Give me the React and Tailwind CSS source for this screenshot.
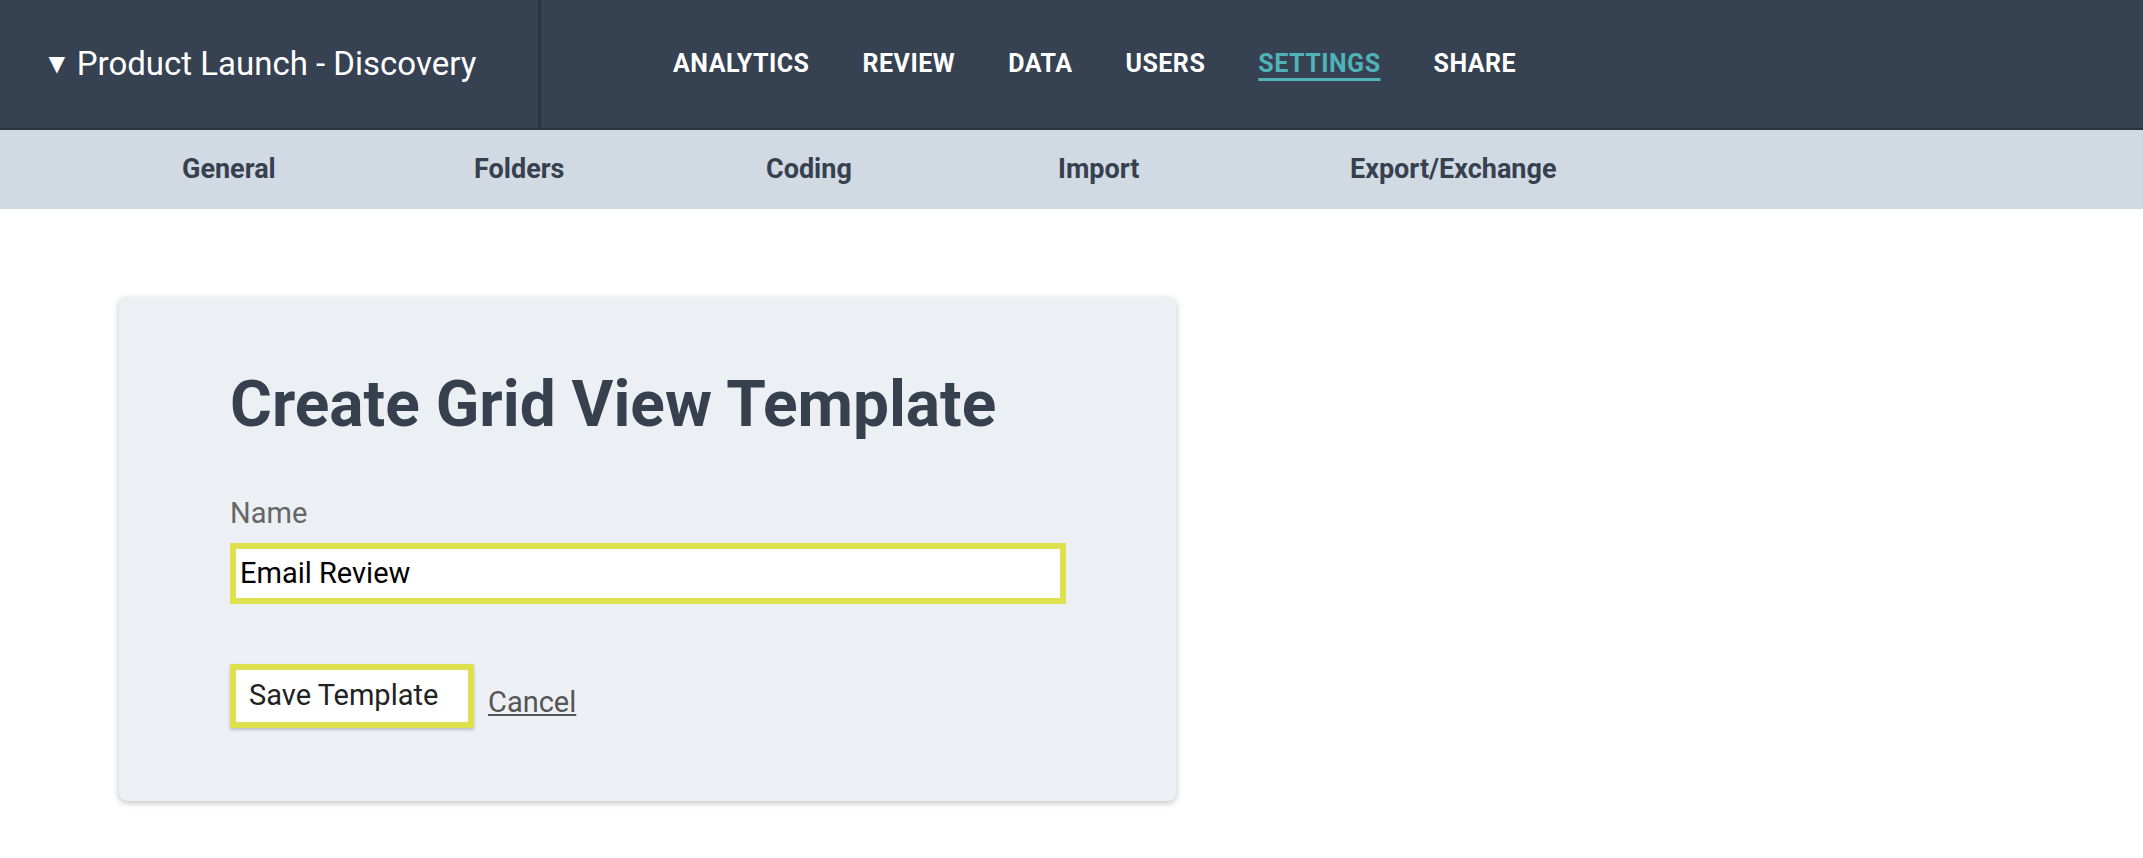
export default function App() {
  const nav = ["ANALYTICS", "REVIEW", "DATA", "USERS", "SETTINGS", "SHARE"];
  const sub = ["General", "Folders", "Coding", "Import", "Export/Exchange"];
  return (
    <div className="w-[2143px] h-[858px] bg-white" style={{ fontFamily: "Roboto, sans-serif" }}>
      <div className="h-[130px] bg-[#364152] flex border-b-2 border-[#2a3340]">
        <div className="w-[541px] border-r-[3px] border-[#2a3340] flex items-center pl-[43px] text-white text-[33px]">
          <span className="text-[28px] mr-[6px]">▼</span>Product Launch - Discovery
        </div>
        <div className="flex items-center pl-[132px] gap-[53px]">
          {nav.map((n) => (
            <span key={n} className={`text-[25px] font-bold tracking-[0.5px] ${n === "SETTINGS" ? "text-[#4fb3b8] underline underline-offset-[6px] decoration-[3px]" : "text-white"}`}>{n}</span>
          ))}
        </div>
      </div>
      <div className="h-[79px] bg-[#d1dae3] flex items-center pl-[182px]">
        {sub.map((s) => (
          <span key={s} className="w-[292px] text-[27px] font-bold text-[#36404f]">{s}</span>
        ))}
      </div>
      <div className="pl-[119px] pt-[88px]">
        <div className="w-[1057px] h-[504px] bg-[#ecf0f4] rounded-[8px] shadow-[0_2px_6px_rgba(0,0,0,0.25)] pl-[111px] pt-[76px]">
          <h1 className="text-[64px] font-bold text-[#36404f] leading-none">Create Grid View Template</h1>
          <div className="mt-[62px] text-[29px] text-[#666] leading-none">Name</div>
          <div className="mt-[15px] w-[836px] h-[61px] border-[6px] border-[#dfe04e] bg-white flex items-center pl-[4px] text-[29px] text-black">Email Review</div>
          <div className="mt-[60px] flex items-end">
            <div className="w-[244px] h-[64px] border-[6px] border-[#dfe04e] bg-white flex items-center pl-[13px] text-[29px] text-[#222] shadow-[0_2px_3px_rgba(0,0,0,0.2)]">Save Template</div>
            <span className="ml-[14px] mb-[4px] text-[29px] text-[#555] underline">Cancel</span>
          </div>
        </div>
      </div>
    </div>
  );
}
